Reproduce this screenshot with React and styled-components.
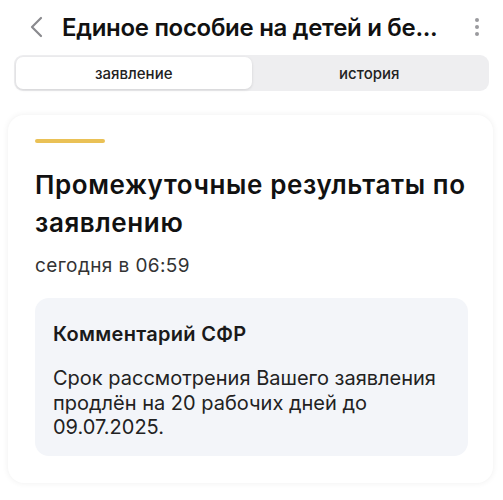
import React from 'react';
import styled, { createGlobalStyle } from 'styled-components';

const GlobalStyle = createGlobalStyle`
  html, body {
    margin: 0;
    padding: 0;
    background: #ffffff;
    font-family: Inter, "Noto Sans", sans-serif;
    color: #111111;
  }
`;

const Page = styled.div`
  width: 503px;
  height: 500px;
  overflow: hidden;
  background: #ffffff;
`;

const Header = styled.div`
  display: flex;
  align-items: center;
  height: 54px;
  padding: 0 22px 0 24px;
  box-sizing: border-box;
`;

const BackButton = styled.div`
  display: flex;
  align-items: center;
  justify-content: center;
  width: 24px;
  height: 24px;
  margin-right: 14px;
`;

const Title = styled.h1`
  flex: 1;
  margin: 0;
  font-size: 24px;
  font-weight: 600;
  letter-spacing: -0.3px;
  white-space: nowrap;
  overflow: hidden;
  color: #111111;
`;

const Kebab = styled.div`
  display: flex;
  flex-direction: column;
  gap: 3px;
  align-items: center;
  width: 8px;
`;

const Dot = styled.span`
  width: 4px;
  height: 4px;
  border-radius: 50%;
  background: #9a9a9e;
`;

const Tabs = styled.div`
  display: flex;
  margin: 1px 14px 0 14px;
  padding: 2px;
  height: 36px;
  box-sizing: border-box;
  background: #eeeef0;
  border-radius: 9px;
`;

const Tab = styled.div`
  flex: 1;
  display: flex;
  align-items: center;
  justify-content: center;
  font-size: 15px;
  font-weight: 500;
  color: #222222;
  border-radius: 7px;
  background: ${p => (p.$active ? '#ffffff' : 'transparent')};
  box-shadow: ${p => (p.$active ? '0 1px 3px rgba(0,0,0,0.12)' : 'none')};
`;

const Card = styled.div`
  margin: 24px 10px 0 8px;
  padding: 24px 25px 27px 27px;
  border-radius: 16px;
  background: #ffffff;
  box-shadow: 0 0 6px rgba(0, 0, 0, 0.07);
  box-sizing: border-box;
`;

const Accent = styled.div`
  width: 70px;
  height: 4px;
  border-radius: 2px;
  background: #eac156;
`;

const Heading = styled.h2`
  margin: 23px 0 0;
  font-size: 26px;
  line-height: 38px;
  font-weight: 600;
  letter-spacing: 0.6px;
  color: #111111;
`;

const Date = styled.div`
  margin-top: 12px;
  font-size: 19px;
  line-height: 24px;
  letter-spacing: 0.4px;
  color: #333333;
`;

const Comment = styled.div`
  margin-top: 20px;
  padding: 23px 20px 16px 18px;
  border-radius: 14px;
  background: #f3f5f9;
`;

const CommentTitle = styled.div`
  font-size: 20px;
  line-height: 26px;
  font-weight: 600;
  letter-spacing: 0.3px;
  color: #1a1a1a;
`;

const CommentText = styled.p`
  margin: 19px 0 0;
  font-size: 20px;
  line-height: 24.5px;
  color: #222222;
`;

export default function App() {
  return (
    <Page>
      <GlobalStyle />
      <Header>
        <BackButton>
          <svg width="14" height="22" viewBox="0 0 14 22" fill="none">
            <path d="M12 2 L3 11 L12 20" stroke="#8a8a8e" strokeWidth="2.2" strokeLinecap="round" strokeLinejoin="round" />
          </svg>
        </BackButton>
        <Title>Единое пособие на детей и бе...</Title>
        <Kebab>
          <Dot />
          <Dot />
          <Dot />
        </Kebab>
      </Header>
      <Tabs>
        <Tab $active>заявление</Tab>
        <Tab>история</Tab>
      </Tabs>
      <Card>
        <Accent />
        <Heading>Промежуточные результаты по заявлению</Heading>
        <Date>сегодня в 06:59</Date>
        <Comment>
          <CommentTitle>Комментарий СФР</CommentTitle>
          <CommentText>
            Срок рассмотрения Вашего заявления продлён на 20 рабочих дней до 09.07.2025.
          </CommentText>
        </Comment>
      </Card>
    </Page>
  );
}
